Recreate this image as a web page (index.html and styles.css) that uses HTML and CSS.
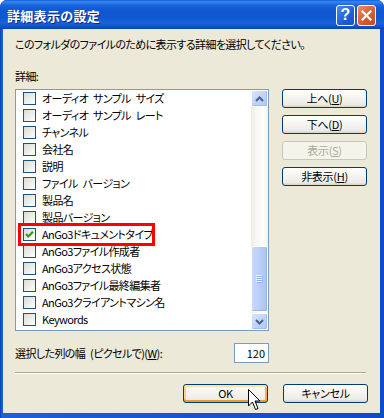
FILE: index.html
```html
<!DOCTYPE html>
<html lang="ja">
<head>
<meta charset="utf-8">
<title>詳細表示の設定</title>
<link rel="stylesheet" href="styles.css">
</head>
<body>
<div class="window">
  <div class="titlebar">
    <span class="title">詳細表示の設定</span>
    <div class="tbtns">
      <div class="tbtn help">?</div>
      <div class="tbtn close">
        <svg width="11" height="11" viewBox="0 0 11 11"><path d="M1.5 1.5 L9.5 9.5 M9.5 1.5 L1.5 9.5" stroke="#fff" stroke-width="2.2" stroke-linecap="square"/></svg>
      </div>
    </div>
  </div>
  <div class="frame">
    <div class="client">
      <p class="desc">このフォルダのファイルのために表示する詳細を選択してください。</p>
      <p class="label">詳細:</p>
      <div class="main">
        <div class="listbox">
          <ul class="items">
            <li class="item"><span class="cb"></span><span>オーディオ サンプル サイズ</span></li>
            <li class="item"><span class="cb"></span><span>オーディオ サンプル レート</span></li>
            <li class="item"><span class="cb"></span><span>チャンネル</span></li>
            <li class="item"><span class="cb"></span><span>会社名</span></li>
            <li class="item"><span class="cb"></span><span>説明</span></li>
            <li class="item"><span class="cb"></span><span>ファイル バージョン</span></li>
            <li class="item"><span class="cb"></span><span>製品名</span></li>
            <li class="item"><span class="cb"></span><span>製品バージョン</span></li>
            <li class="item marked"><span class="cb checked"><svg width="11" height="11" viewBox="0 0 11 11"><path d="M2 5 L4.3 7.5 L9 2.8" fill="none" stroke="#21A121" stroke-width="2.2"/></svg></span><span>AnGo3ドキュメントタイプ</span><span class="redbox"></span></li>
            <li class="item"><span class="cb"></span><span>AnGo3ファイル作成者</span></li>
            <li class="item"><span class="cb"></span><span>AnGo3アクセス状態</span></li>
            <li class="item"><span class="cb"></span><span>AnGo3ファイル最終編集者</span></li>
            <li class="item"><span class="cb"></span><span>AnGo3クライアントマシン名</span></li>
            <li class="item"><span class="cb"></span><span>Keywords</span></li>
          </ul>
          <div class="scrollbar">
            <div class="sb-btn"><svg width="9" height="6" viewBox="0 0 9 6"><path d="M1 5 L4.5 1.5 L8 5" fill="none" stroke="#4D6185" stroke-width="2"/></svg></div>
            <div class="sb-track">
              <div class="sb-thumb">
                <svg width="7" height="8" viewBox="0 0 7 8"><path d="M0 0.5 H6 M0 2.5 H6 M0 4.5 H6 M0 6.5 H6" stroke="#EEF4FE" stroke-width="1"/><path d="M1 1.5 H7 M1 3.5 H7 M1 5.5 H7 M1 7.5 H7" stroke="#8CB0F8" stroke-width="1"/></svg>
              </div>
            </div>
            <div class="sb-btn"><svg width="9" height="6" viewBox="0 0 9 6"><path d="M1 1 L4.5 4.5 L8 1" fill="none" stroke="#4D6185" stroke-width="2"/></svg></div>
          </div>
        </div>
        <div class="side">
          <button class="btn">上へ(<u>U</u>)</button>
          <button class="btn">下へ(<u>D</u>)</button>
          <button class="btn disabled">表示(<u>S</u>)</button>
          <button class="btn">非表示(<u>H</u>)</button>
        </div>
      </div>
      <div class="width-row">
        <span>選択した列の幅 (ピクセルで)(<u>W</u>):</span>
        <div class="input">120</div>
      </div>
      <div class="sep"></div>
      <div class="footer">
        <button class="btn ok">OK</button>
        <button class="btn">キャンセル</button>
        <svg class="cursor" width="13" height="22" viewBox="0 0 13 22"><path d="M0.5 0.5 L0.5 17 L4.5 13 L7.5 20.5 L10 19.5 L7 12 L12 12 Z" fill="#fff" stroke="#000" stroke-width="1" stroke-linejoin="miter"/></svg>
      </div>
    </div>
  </div>
</div>
</body>
</html>
```
FILE: styles.css
```css
* { box-sizing: border-box; }
html, body { margin: 0; padding: 0; }
body {
  width: 384px;
  height: 418px;
  overflow: hidden;
  background: #ffffff;
  font-family: "Noto Sans CJK JP", "Noto Sans", sans-serif;
  font-size: 11px;
  letter-spacing: -0.6px;
  word-spacing: 3px;
  font-feature-settings: "palt";
  color: #000;
}
.window {
  width: 384px;
  height: 418px;
  display: flex;
  flex-direction: column;
  border-radius: 7px 7px 0 0;
  overflow: hidden;
  background: #0A47BE;
}
.titlebar {
  height: 29px;
  flex: none;
  display: flex;
  align-items: center;
  justify-content: space-between;
  padding: 0 8px 0 7px;
  background: linear-gradient(#0B5CD8 0%, #3B86EE 6%, #2A74E6 12%, #1560DA 20%, #0F56D0 40%, #1159D2 60%, #1862DA 80%, #0F52C8 92%, #0843AE 100%);
}
.title {
  color: #fff;
  font-weight: bold;
  font-size: 13px;
  letter-spacing: 0.3px;
  font-feature-settings: normal;
  text-shadow: 1px 1px 0 #0A2A8A;
  margin-top: 1px;
}
.tbtns { display: flex; gap: 2px; margin-top: 1px; }
.tbtn {
  width: 19px;
  height: 21px;
  border: 1px solid #fff;
  border-radius: 3px;
  display: flex;
  align-items: center;
  justify-content: center;
}
.help {
  background: linear-gradient(135deg, #4C8AF0, #1F5ED8 60%, #1A52C4);
  color: #fff;
  font-family: "Liberation Sans", sans-serif;
  font-weight: bold;
  font-size: 16px;
  letter-spacing: 0;
  line-height: 1;
}
.close {
  background: linear-gradient(135deg, #F08A66, #E05A30 55%, #CC4520);
}
.frame {
  flex: 1;
  display: flex;
  padding: 0 4px 5px 3px;
  background: linear-gradient(to right, #0A3FB4, #1D5FD6 2px, #0E4BC6 100%);
}
.client {
  flex: 1;
  background: #ECE9D8;
  padding: 8px 12px 10px 12px;
  display: flex;
  flex-direction: column;
}
.desc { margin: 0; height: 14px; line-height: 14px; white-space: nowrap; }
.label { margin: 18px 0 0; height: 14px; line-height: 14px; }
.main { margin-top: 6px; display: flex; gap: 13px; }
.listbox {
  width: 254px;
  height: 242px;
  border: 1px solid #7F9DB9;
  background: #fff;
  display: flex;
}
.items { flex: 1; list-style: none; margin: 0; padding: 0; }
.item {
  height: 17px;
  display: flex;
  align-items: center;
  gap: 6px;
  padding-left: 7px;
  white-space: nowrap;
  position: relative;
  line-height: 17px;
}
.cb {
  width: 13px;
  height: 13px;
  flex: none;
  border: 1px solid #1C5180;
  background: linear-gradient(135deg, #DCDBD5, #F4F4F0 70%, #FFFFFF);
  display: flex;
  align-items: center;
  justify-content: center;
}
.redbox {
  position: absolute;
  left: 2px;
  top: -3px;
  width: 137px;
  height: 23px;
  border: 3px solid #FF0000;
  z-index: 2;
}
.scrollbar {
  width: 17px;
  flex: none;
  display: flex;
  flex-direction: column;
}
.sb-btn {
  height: 17px;
  flex: none;
  border: 1px solid #fff;
  border-radius: 2px;
  background: linear-gradient(135deg, #DAE6FE, #C1D3FB 50%, #B0C7F6);
  box-shadow: inset -1px -1px 0 #A3BDEE;
  display: flex;
  align-items: center;
  justify-content: center;
}
.sb-track {
  flex: 1;
  display: flex;
  flex-direction: column;
  justify-content: flex-end;
  padding-bottom: 1px;
  background: linear-gradient(to right, #EEEDE5, #F7F6F1 30%, #FEFEFB 75%, #F3F1EC);
}
.sb-thumb {
  height: 66px;
  border: 1px solid #fff;
  border-radius: 2px;
  background: linear-gradient(to right, #C9D9FC, #B9CEF8 50%, #AAC3F4);
  box-shadow: inset -1px -1px 0 #98B4EA;
  display: flex;
  align-items: center;
  justify-content: center;
}
.side {
  width: 85px;
  display: flex;
  flex-direction: column;
  gap: 7px;
}
.btn {
  width: 85px;
  height: 19px;
  padding: 0;
  border: 1px solid #003C74;
  border-radius: 3px;
  background: linear-gradient(#FFFFFF, #F6F5F1 40%, #ECEBE6 85%, #D8D2C6);
  font-family: inherit;
  font-size: 11px;
  letter-spacing: -0.3px;
  font-feature-settings: "palt";
  color: #000;
  line-height: 17px;
}
.btn.disabled {
  border-color: #C9C7BA;
  background: #F5F4EA;
  color: #ACA899;
}
.btn.ok {
  box-shadow: inset 0 2px 0 #FFE3A0, inset 0 -2px 0 #EE9A2C, inset 2px 0 0 #FAD17C, inset -2px 0 0 #F4B04A;
}
.width-row {
  margin-top: 12px;
  width: 254px;
  height: 20px;
  display: flex;
  align-items: center;
  justify-content: space-between;
  white-space: nowrap;
}
.input {
  width: 35px;
  height: 20px;
  border: 1px solid #7F9DB9;
  background: #fff;
  text-align: right;
  padding-right: 3px;
  line-height: 18px;
  letter-spacing: 0;
}
.sep {
  margin-top: 9px;
  width: 351px;
  height: 2px;
  border-top: 1px solid #ACA899;
  border-bottom: 1px solid #fff;
}
.footer {
  margin-top: 10px;
  display: flex;
  justify-content: flex-end;
  gap: 15px;
  position: relative;
}
.cursor {
  position: absolute;
  left: 233px;
  top: 5px;
}
```
